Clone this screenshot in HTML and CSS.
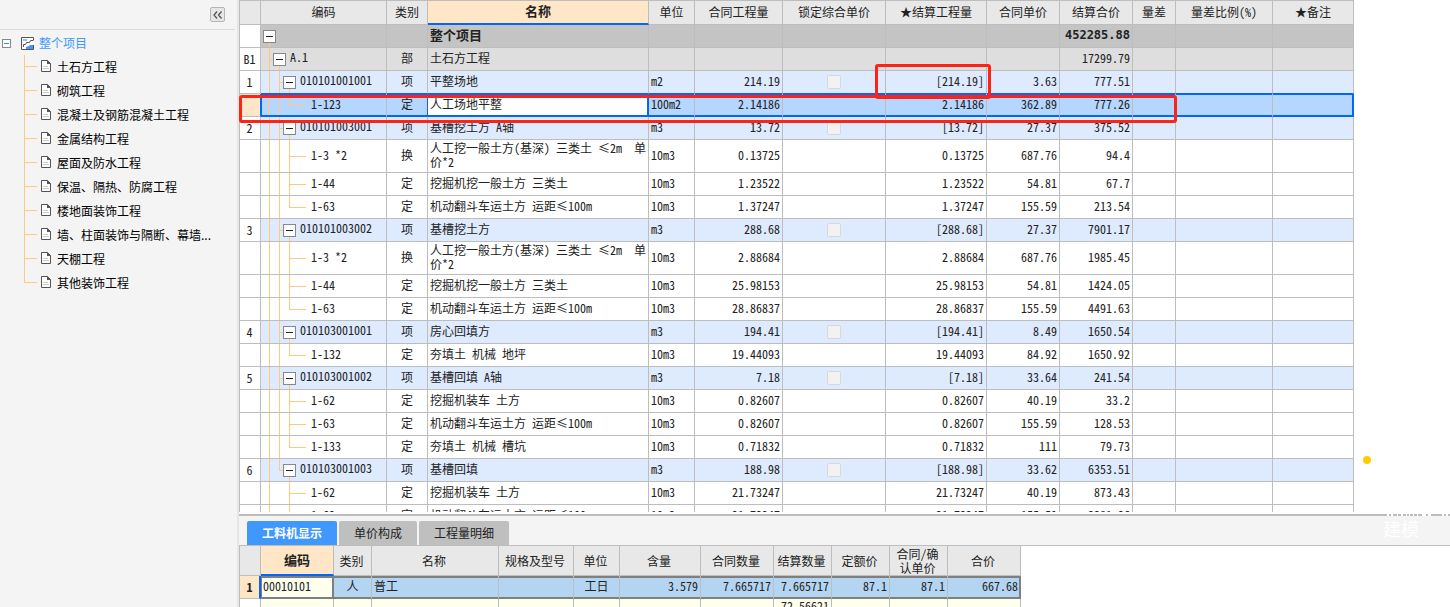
FILE: index.html
```html
<!DOCTYPE html>
<html lang="zh-CN">
<head>
<meta charset="utf-8">
<title>整个项目</title>
<link rel="stylesheet" href="styles.css">
</head>
<body>
<svg width="0" height="0" class="defs" aria-hidden="true">
<symbol id="doc" viewBox="0 0 10 12"><path d="M.5.5H6.5L9.5 3.5V11.5H.5Z" fill="#fff" stroke="#555"/><path d="M6 0L10 4H6Z" fill="#555"/><path d="M2 6.5H7M2 8.5H8" stroke="#ccc"/></symbol>
</svg>
<div class="app">
<aside class="side">
<div class="side-top"><button class="collapse" aria-label="收起"><svg width="10" height="8" viewBox="0 0 10 8"><path d="M4 0.5L1 4L4 7.5M8.500 0.5L5.500 4L8.500 7.500" fill="none" stroke="#555" stroke-width="1.300"/></svg></button></div>
<div class="root"><button class="fold" aria-label="折叠"></button><svg width="13" height="13" viewBox="0 0 13 13"><path d="M0 0H13V13H0Z" fill="#fff"/><path d="M12.500 3V.5H.5V12.500H4" fill="none" stroke="#555"/><path d="M2 2H6V4H2Z" fill="#8fc4ff"/><path d="M12.500 3.500H9.500L8.500 5.500H5.500L4.500 7.500H2.500V10" fill="none" stroke="#555"/><path d="M5 12V10L8 9L9 8H12V12Z" fill="#4098ff"/><path d="M4 12.500H12.500V8" fill="none" stroke="#555"/></svg><a href="#">整个项目</a></div>
<ul class="tree">
<li><svg class="doc"><use href="#doc"/></svg><a href="#">土石方工程</a>
<li><svg class="doc"><use href="#doc"/></svg><a href="#">砌筑工程</a>
<li><svg class="doc"><use href="#doc"/></svg><a href="#">混凝土及钢筋混凝土工程</a>
<li><svg class="doc"><use href="#doc"/></svg><a href="#">金属结构工程</a>
<li><svg class="doc"><use href="#doc"/></svg><a href="#">屋面及防水工程</a>
<li><svg class="doc"><use href="#doc"/></svg><a href="#">保温、隔热、防腐工程</a>
<li><svg class="doc"><use href="#doc"/></svg><a href="#">楼地面装饰工程</a>
<li><svg class="doc"><use href="#doc"/></svg><a href="#">墙、柱面装饰与隔断、幕墙...</a>
<li><svg class="doc"><use href="#doc"/></svg><a href="#">天棚工程</a>
<li><svg class="doc"><use href="#doc"/></svg><a href="#">其他装饰工程</a>
</ul>
</aside>
<main class="main">
<section class="upper">
<div class="clip">
<table class="grid bill">
<colgroup><col class="w21"><col class="w126"><col class="w41"><col class="w221"><col class="w46"><col class="w88"><col class="w103"><col class="w101"><col class="w73"><col class="w73"><col class="w43"><col class="w97"><col class="w81"></colgroup>
<thead><tr><th><th>编码<th>类别<th class="on">名称<th>单位<th>合同工程量<th>锁定综合单价<th>★结算工程量<th>合同单价<th>结算合价<th>量差<th>量差比例(%)<th>★备注</thead>
<tbody>
<tr class="total"><td><td><button class="box" aria-label="折叠"></button><td><td>整个项目<td><td><td><td><td><td>452285.88<td><td><td>
<tr class="part"><td>B1<td><button class="box" aria-label="折叠"></button>A.1<td>部<td>土石方工程<td><td><td><td><td><td>17299.79<td><td><td>
<tr class="item before"><td>1<td><button class="box" aria-label="折叠"></button>010101001001<td>项<td>平整场地<td>m2<td>214.19<td><input type="checkbox" aria-label="锁定综合单价"><td>[214.19]<td>3.63<td>777.51<td><td><td>
<tr class="sub last current"><td><td>1-123<td>定<td>人工场地平整<td>100m2<td>2.14186<td><td>2.14186<td>362.89<td>777.26<td><td><td>
<tr class="item"><td>2<td><button class="box" aria-label="折叠"></button>010101003001<td>项<td>基槽挖土方 A轴<td>m3<td>13.72<td><input type="checkbox" aria-label="锁定综合单价"><td>[13.72]<td>27.37<td>375.52<td><td><td>
<tr class="sub tall"><td><td>1-3 *2<td>换<td>人工挖一般土方(基深) 三类土 ≤2m&nbsp; 单价*2<td>10m3<td>0.13725<td><td>0.13725<td>687.76<td>94.4<td><td><td>
<tr class="sub"><td><td>1-44<td>定<td>挖掘机挖一般土方 三类土<td>10m3<td>1.23522<td><td>1.23522<td>54.81<td>67.7<td><td><td>
<tr class="sub last"><td><td>1-63<td>定<td>机动翻斗车运土方 运距≤100m<td>10m3<td>1.37247<td><td>1.37247<td>155.59<td>213.54<td><td><td>
<tr class="item"><td>3<td><button class="box" aria-label="折叠"></button>010101003002<td>项<td>基槽挖土方<td>m3<td>288.68<td><input type="checkbox" aria-label="锁定综合单价"><td>[288.68]<td>27.37<td>7901.17<td><td><td>
<tr class="sub tall"><td><td>1-3 *2<td>换<td>人工挖一般土方(基深) 三类土 ≤2m&nbsp; 单价*2<td>10m3<td>2.88684<td><td>2.88684<td>687.76<td>1985.45<td><td><td>
<tr class="sub"><td><td>1-44<td>定<td>挖掘机挖一般土方 三类土<td>10m3<td>25.98153<td><td>25.98153<td>54.81<td>1424.05<td><td><td>
<tr class="sub last"><td><td>1-63<td>定<td>机动翻斗车运土方 运距≤100m<td>10m3<td>28.86837<td><td>28.86837<td>155.59<td>4491.63<td><td><td>
<tr class="item"><td>4<td><button class="box" aria-label="折叠"></button>010103001001<td>项<td>房心回填方<td>m3<td>194.41<td><input type="checkbox" aria-label="锁定综合单价"><td>[194.41]<td>8.49<td>1650.54<td><td><td>
<tr class="sub last"><td><td>1-132<td>定<td>夯填土 机械 地坪<td>10m3<td>19.44093<td><td>19.44093<td>84.92<td>1650.92<td><td><td>
<tr class="item"><td>5<td><button class="box" aria-label="折叠"></button>010103001002<td>项<td>基槽回填 A轴<td>m3<td>7.18<td><input type="checkbox" aria-label="锁定综合单价"><td>[7.18]<td>33.64<td>241.54<td><td><td>
<tr class="sub"><td><td>1-62<td>定<td>挖掘机装车 土方<td>10m3<td>0.82607<td><td>0.82607<td>40.19<td>33.2<td><td><td>
<tr class="sub"><td><td>1-63<td>定<td>机动翻斗车运土方 运距≤100m<td>10m3<td>0.82607<td><td>0.82607<td>155.59<td>128.53<td><td><td>
<tr class="sub last"><td><td>1-133<td>定<td>夯填土 机械 槽坑<td>10m3<td>0.71832<td><td>0.71832<td>111<td>79.73<td><td><td>
<tr class="item end"><td>6<td><button class="box" aria-label="折叠"></button>010103001003<td>项<td>基槽回填<td>m3<td>188.98<td><input type="checkbox" aria-label="锁定综合单价"><td>[188.98]<td>33.62<td>6353.51<td><td><td>
<tr class="sub tail"><td><td>1-62<td>定<td>挖掘机装车 土方<td>10m3<td>21.73247<td><td>21.73247<td>40.19<td>873.43<td><td><td>
<tr class="sub tail"><td><td>1-63<td>定<td>机动翻斗车运土方 运距≤100m<td>10m3<td>21.73247<td><td>21.73247<td>155.59<td>3381.36<td><td><td>
</tbody>
</table>
</div>
<div class="mark mark-row"></div>
<div class="mark mark-cell"></div>
<div class="dot"></div>
</section>
<section class="lower">
<nav class="tabs"><button class="tab active">工料机显示</button><button class="tab">单价构成</button><button class="tab">工程量明细</button><span class="float">建模</span><svg class="specks" width="64" height="2" viewBox="0 0 64 2" aria-hidden="true"><path d="M1 1H3M5 1H7M11 1H12M15 1H17M20 1H21M23 1H24M27 1H28M31 1H32M36 1H40M42 1H45M56 1H58M60 1H62" stroke="#fff" stroke-width="2"/></svg></nav>
<table class="grid detail">
<colgroup><col class="w21"><col class="w73"><col class="w38"><col class="w127"><col class="w75"><col class="w46"><col class="w81"><col class="w73"><col class="w58"><col class="w58"><col class="w58"><col class="w73"></colgroup>
<thead><tr><th><th class="on">编码<th>类别<th>名称<th>规格及型号<th>单位<th>含量<th>合同数量<th>结算数量<th>定额价<th>合同/确认单价<th>合价</thead>
<tbody>
<tr class="picked"><td>1<td>00010101<td>人<td>普工<td><td>工日<td>3.579<td>7.665717<td>7.665717<td>87.1<td>87.1<td>667.68
<tr class="next"><td><td><td><td><td><td><td><td><td>72.56621<td><td><td>
</tbody>
</table>
</section>
</main>
</div>
</body>
</html>
```
FILE: styles.css
```css
:root {
  --line: #bdbdbd;
  --guide: #ffc983;
  --blue: #0066ff;
  --cjk: "Noto Sans CJK SC", sans-serif;
  --mono: "Noto Sans Mono CJK SC", "Noto Sans CJK SC", monospace;
}
* { box-sizing: border-box; }
body { margin: 0; background: #fff; color: #222; font: 12px/14px var(--cjk); }
button { font: inherit; margin: 0; padding: 0; border: 0; }
a { color: inherit; text-decoration: none; }
.defs { position: absolute; }
.app { display: flex; height: 100vh; overflow: hidden; }

.side { flex: 0 0 239px; background: #f4f4f4; border-right: 2px solid #e6e6e6; color: #000; }
.side-top { height: 30px; margin-right: 2px; padding: 7px 10px 0 0; border-bottom: 1px solid #dcdcdc; display: flex; justify-content: flex-end; }
.collapse { width: 15px; height: 15px; border: 1px solid #b4b4b4; border-radius: 2px; background: #e6e6e6; display: grid; place-items: center; }
.root { display: flex; align-items: center; height: 24px; margin-top: 1px; padding-left: 2px; color: #4098ff; }
.fold { width: 9px; height: 9px; border: 1px solid #888; background: linear-gradient(#2d9ec4, #2d9ec4) center / 5px 1px no-repeat #fff; margin-right: 10px; }
.root a { margin-left: 5px; }
.tree { list-style: none; margin: 0; padding: 0 0 0 24px; }
.tree li { display: flex; align-items: center; height: 24px; padding-left: 17px; background: linear-gradient(var(--guide), var(--guide)) 0 0 / 1px 100% no-repeat, linear-gradient(var(--guide), var(--guide)) 0 11px / 13px 1px no-repeat; }
.tree li:last-child { background-size: 1px 12px, 13px 1px; }
.doc { width: 10px; height: 12px; margin: 0 6px 2px 0; }

.main { flex: 1; min-width: 0; display: flex; flex-direction: column; }
.upper { position: relative; flex: 1; min-height: 0; padding-bottom: 2px; border-bottom: 2px solid #bdbdbd; }
.clip { height: 100%; overflow: hidden; }

.grid { border-collapse: separate; border-spacing: 0; table-layout: fixed; width: 0; border-left: 1px solid var(--line); border-top: 1px solid var(--line); font-family: var(--mono); }
.grid th, .grid td { padding: 0 2px 2px; border-right: 1px solid var(--line); border-bottom: 1px solid var(--line); height: 23px; overflow: hidden; }
.grid th { height: 24px; background: #e8e8e8; font-weight: 400; text-align: center; }
.grid th.on { background: #ffe6c6; border-bottom: 2px solid var(--blue); font-weight: 700; font-size: 13px; }
.w21 { width: 21px; } .w38 { width: 38px; } .w41 { width: 41px; } .w43 { width: 43px; }
.w46 { width: 46px; } .w58 { width: 58px; } .w73 { width: 73px; } .w75 { width: 75px; }
.w81 { width: 81px; } .w88 { width: 88px; } .w97 { width: 97px; } .w101 { width: 101px; }
.w103 { width: 103px; } .w126 { width: 126px; } .w127 { width: 127px; } .w221 { width: 221px; }

.bill td { white-space: nowrap; text-align: right; }
.bill .tall td { height: 33px; white-space: normal; }
.bill td:nth-child(1), .bill td:nth-child(3), .bill td:nth-child(7) { text-align: center; }
.bill td:nth-child(1) { background: #fff; padding: 0 1px 0 0; }
.bill td:nth-child(2), .bill td:nth-child(4), .bill td:nth-child(5) { text-align: left; }
.box { width: 13px; height: 13px; margin-right: 4px; vertical-align: middle; border: 1px solid #888; background: linear-gradient(#222, #222) center / 7px 1px no-repeat #fff; }
.bill input { appearance: none; width: 14px; height: 14px; margin: 0; vertical-align: middle; border: 1px solid #d8d8d8; border-radius: 2px; background: #f2f2f2; }

.total { background: #c4c4c4; font-weight: 700; }
.total td:nth-child(4) { font-size: 13px; }
.total td:nth-child(10) { font-family: "DejaVu Sans Mono", monospace; }
.part { background: #dedede; }
.item { background: #deeafe; }

/* Tree guides inside the code column, one layer per level */
.bill td:nth-child(2) { --g: linear-gradient(var(--guide), var(--guide)); background-repeat: no-repeat; }
.total td:nth-child(2) { background-image: var(--g); background-position: 8px 100%; background-size: 1px 5px; }
.part td:nth-child(2) { padding-left: 12px; background-image: var(--g), var(--g), var(--g); background-position: 8px 0, 8px 50%, 18px 100%; background-size: 1px 100%, 5px 1px, 1px 5px; }
.item td:nth-child(2) { padding-left: 22px; background-image: var(--g), var(--g), var(--g), var(--g); background-position: 8px 0, 18px 0, 18px 50%, 28px 100%; background-size: 1px 100%, 1px 100%, 5px 1px, 1px 5px; }
.sub td:nth-child(2) { padding-left: 50px; background-image: var(--g), var(--g), var(--g), var(--g); background-position: 8px 0, 18px 0, 28px 0, 28px 50%; background-size: 1px 100%, 1px 100%, 1px 100%, 17px 1px; }
.sub.last td:nth-child(2) { background-size: 1px 100%, 1px 100%, 1px 50%, 17px 1px; }
.item.end td:nth-child(2) { background-size: 1px 100%, 1px 50%, 5px 1px, 1px 5px; }
.sub.tail td:nth-child(2) { background-size: 1px 100%, 0 0, 1px 100%, 17px 1px; }

.before td + td, .current td + td { border-bottom-color: var(--blue); }
.current { background: #b4d6ff; }
.current td + td { box-shadow: inset 0 1px var(--blue), inset 0 -1px var(--blue); }
.current td:nth-child(1) { background: #ffe6c6; border-right-color: var(--blue); }
.current td:nth-child(2) { box-shadow: inset 1px 1px var(--blue), inset 0 -1px var(--blue); }
.current td:nth-child(3) { border-right-color: var(--blue); }
.current td:nth-child(4) { background: #fff; border-right-color: var(--blue); box-shadow: inset 0 1px var(--blue), inset -1px -1px var(--blue); }
.current td:last-child { border-right-color: var(--blue); box-shadow: inset -1px 1px var(--blue), inset 0 -1px var(--blue); }

.mark { position: absolute; border: 3px solid #ff2215; border-radius: 3px; outline: 1px solid #ff221540; outline-offset: -1px; }
.mark-row { left: 0; top: 95px; width: 938px; height: 28px; }
.mark-cell { left: 636px; top: 64px; width: 116px; height: 35px; }
.dot { position: absolute; left: 1124px; top: 456px; width: 8px; height: 8px; border-radius: 50%; background: #ffcc00; }

.lower { flex: 0 0 91px; min-height: 0; background: linear-gradient(var(--line), var(--line)) 0 29px / 100% 1px no-repeat; }
.tabs { position: relative; display: flex; gap: 2px; height: 29px; padding: 5px 0 0 8px; background: #f4f4f4; }
.tab { padding: 0 15px; border-radius: 2px 2px 0 0; background: #bfbfbf; color: #222; }
.tab.active { background: #4098ff; color: #fff; font-weight: 700; }
.float { position: absolute; right: 31px; top: 3px; color: #fff; font-size: 18px; line-height: 18px; }
.specks { position: absolute; right: 0; top: -2px; }

.detail th { height: 30px; padding: 0 4px; }
.detail th:nth-child(n+3) { padding: 0 4px 0 2px; }
.detail td { text-align: right; background: #ffffee; }
.detail td:nth-child(1) { background: #fff; text-align: center; padding: 0; }
.detail td:nth-child(2), .detail td:nth-child(4) { text-align: left; }
.detail td:nth-child(3), .detail td:nth-child(6) { text-align: center; }
.picked td + td + td { background: #b3d5f2; }
.picked td + td { border-bottom-color: #7f7f7f; box-shadow: inset 0 2px #7f7f7f, inset 0 -1px #7f7f7f; }
.picked td:nth-child(1) { background: #ffe6c6; border-right: 2px solid var(--blue); font-weight: 700; }
.picked td:nth-child(2) { border-right-color: #7f7f7f; box-shadow: inset 1px 2px #7f7f7f, inset -1px -1px #7f7f7f; }
.picked td:last-child { border-right-color: #7f7f7f; box-shadow: inset 0 2px #7f7f7f, inset -1px -1px #7f7f7f; }
.next td { vertical-align: top; }
```
